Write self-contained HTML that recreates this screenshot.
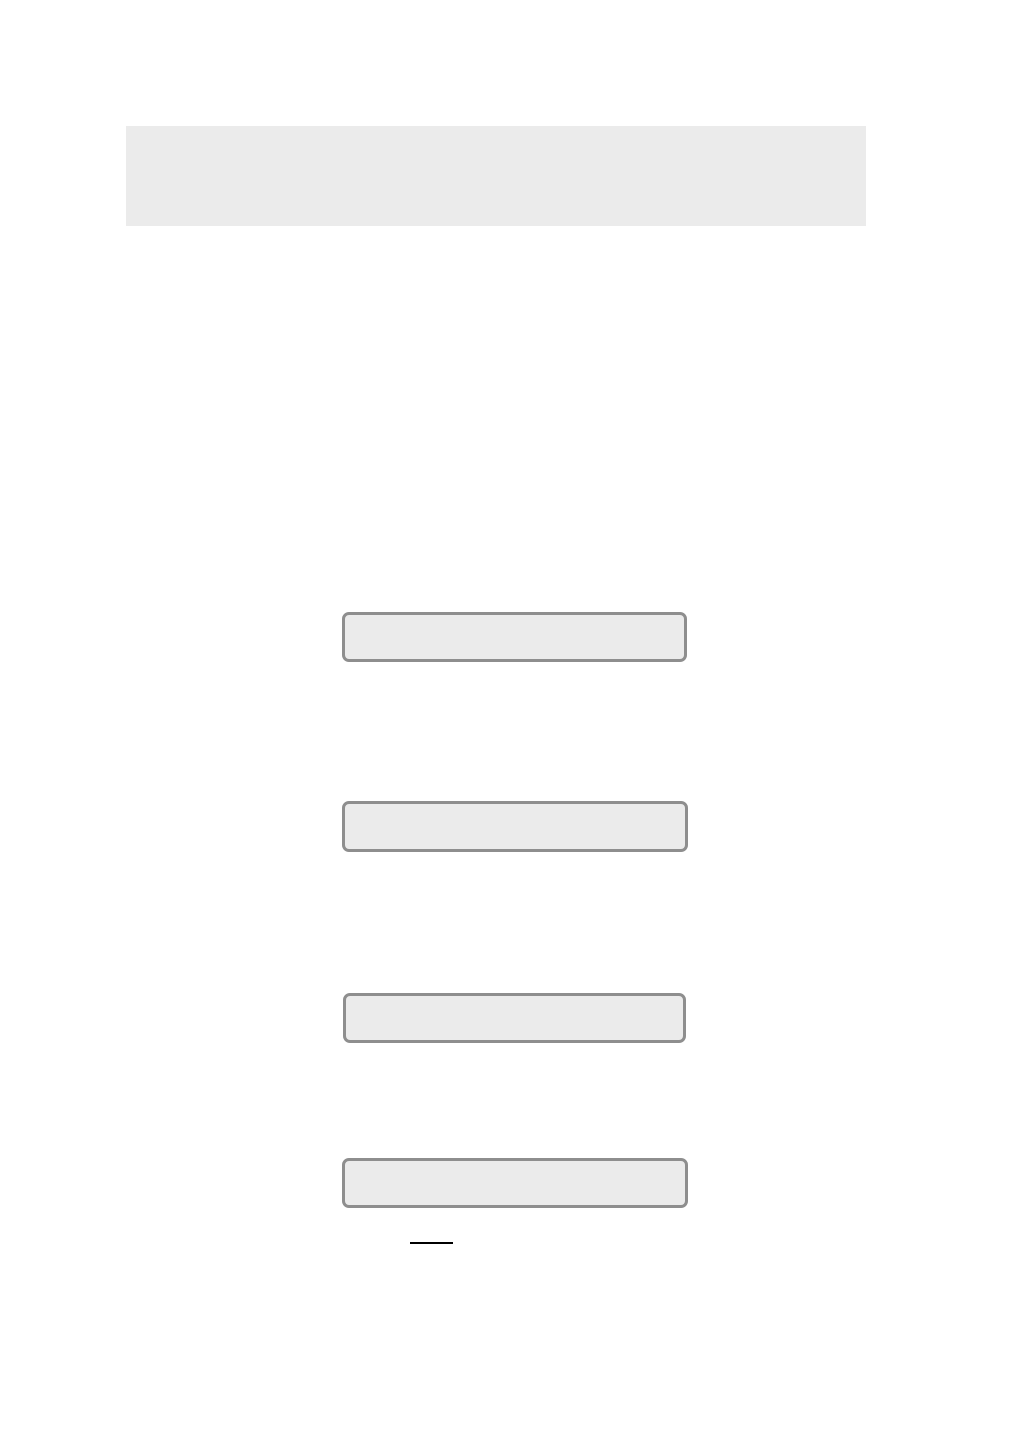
<!DOCTYPE html>
<html><head><style>
body{margin:0;width:1009px;height:1441px;background:#fff;position:relative;overflow:hidden}
.h{position:absolute;left:126px;top:126px;width:740px;height:100px;background:#ebebeb}
.b{position:absolute;box-sizing:border-box;border:3px solid #8e8e8e;border-radius:7px;background:#ebebeb}
.u{position:absolute;left:410px;top:1242px;width:43px;height:2px;background:#000}
</style></head><body>
<div class="h"></div>
<div class="b" style="left:342px;top:612px;width:345px;height:50px"></div>
<div class="b" style="left:342px;top:801px;width:346px;height:51px"></div>
<div class="b" style="left:343px;top:993px;width:343px;height:50px"></div>
<div class="b" style="left:342px;top:1158px;width:346px;height:50px"></div>
<div class="u"></div>
</body></html>
